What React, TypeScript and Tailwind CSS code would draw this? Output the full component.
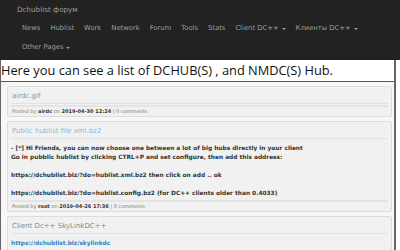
import React from 'react';

const navItems = [
  { label: 'News' },
  { label: 'Hublist' },
  { label: 'Work' },
  { label: 'Network' },
  { label: 'Forum' },
  { label: 'Tools' },
  { label: 'Stats' },
  { label: 'Client DC++', caret: true },
  { label: 'Клиенты DC++', caret: true },
];

const Caret = () => (
  <span className="inline-block ml-[3px] align-middle border-t-[2px] border-x-[2px] border-x-transparent border-t-[#9d9d9d]" />
);

interface PostProps {
  title: string;
  titleClass: string;
  author?: string;
  date?: string;
  children?: React.ReactNode;
}

const Post: React.FC<PostProps> = ({ title, titleClass, author, date, children }) => (
  <div className="bg-[#f1f1f1] border border-[#dcdcdc] rounded-[2px] mb-[4px]">
    <div className="px-[3px] pt-[3px]">
      <div className={`px-[1px] h-[14px] flex items-center text-[7px] border-b border-[#e2e2e2] ${titleClass}`}>{title}</div>
    </div>
    {children && <div className="px-[3px] pt-[5px] pb-[1px] text-[5.85px] font-bold leading-[9px] text-[#333]">{children}</div>}
    {author && (
      <div className="mx-[3px] mt-[1px] border-t-[2px] border-[#e4e4e4] h-[11px] flex items-center px-[1px] text-[5px] text-[#777]">
        Posted by&nbsp;<b className="text-[#333]">{author}</b>&nbsp;on&nbsp;<b className="text-[#333]">{date}</b>&nbsp;|&nbsp;0 comments
      </div>
    )}
    {!author && <div className="h-[2px]" />}
  </div>
);

export default function App() {
  return (
    <div className="w-[400px] h-[250px] overflow-hidden bg-white" style={{ fontFamily: '"DejaVu Sans", Verdana, sans-serif' }}>
      <nav className="bg-[#222] h-[60px] px-[17px] text-[#9d9d9d] text-[6.8px]">
        <div className="h-[20px] flex items-center pt-[1px] text-[7.2px]">Dchublist форум</div>
        <div className="flex items-center h-[17px] pl-[5px] gap-[10px]">
          {navItems.map((n) => (
            <span key={n.label} className="whitespace-nowrap">
              {n.label}
              {n.caret && <Caret />}
            </span>
          ))}
        </div>
        <div className="flex items-center h-[21px] pl-[5px]">
          <span>
            Other Pages
            <Caret />
          </span>
        </div>
      </nav>
      <div className="border-l border-r-[2px] border-[#666] mr-[4px]">
        <div className="h-[22px] flex items-center border-b border-[#555] text-[12.8px] text-[#111] leading-none" style={{ fontFamily: '"Open Sans", sans-serif' }}>
          Here you can see a list of DCHUB(S) , and NMDC(S) Hub.
        </div>
        <div className="bg-[#f7f7f7] pl-[6px] pr-[2px] pt-[4px]">
          <Post title="airdc.gif" titleClass="text-[#5d9cbf]" author="airdc" date="2019-04-30 12:24" />
          <Post title="Public hublist file xml.bz2" titleClass="text-[#8fb8d4]" author="root" date="2019-04-26 17:36">
            <div>- [*] Hi Friends, you can now choose one between a lot of big hubs directly in your client</div>
            <div>Go in pubblic hublist by clicking CTRL+P and set configure, then add this address:</div>
            <div className="h-[9px]" />
            <div>https://dchublist.biz/?do=hublist.xml.bz2 then click on add .. ok</div>
            <div className="h-[9px]" />
            <div>https://dchublist.biz/?do=hublist.config.bz2 (for DC++ clients older than 0.4033)</div>
          </Post>
          <Post title="Client Dc++ SkyLinkDC++" titleClass="text-[#888]">
            <div className="text-[#3b7cc0]">https://dchublist.biz/skylinkdc</div>
          </Post>
        </div>
      </div>
    </div>
  );
}
